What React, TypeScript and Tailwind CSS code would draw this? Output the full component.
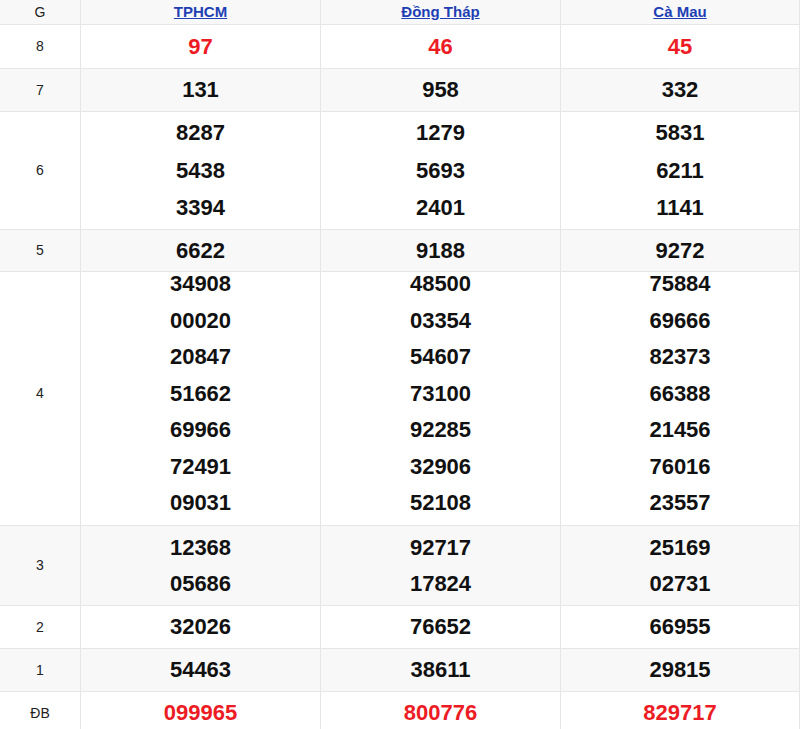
import React from "react";

type Row = {
  g: string;
  vals: string[][];
  h: string;
  bg: string;
  red?: boolean;
  lh: string;
  shift?: boolean;
};

const rows: Row[] = [
  { g: "8", vals: [["97"], ["46"], ["45"]], h: "h-[44px]", bg: "bg-white", red: true, lh: "leading-[36px]" },
  { g: "7", vals: [["131"], ["958"], ["332"]], h: "h-[43px]", bg: "bg-[#f8f8f8]", lh: "leading-[36px]" },
  {
    g: "6",
    vals: [
      ["8287", "5438", "3394"],
      ["1279", "5693", "2401"],
      ["5831", "6211", "1141"],
    ],
    h: "h-[118px]",
    bg: "bg-white",
    lh: "leading-[37.5px]",
  },
  { g: "5", vals: [["6622"], ["9188"], ["9272"]], h: "h-[42px]", bg: "bg-[#f8f8f8]", lh: "leading-[36px]" },
  {
    g: "4",
    vals: [
      ["34908", "00020", "20847", "51662", "69966", "72491", "09031"],
      ["48500", "03354", "54607", "73100", "92285", "32906", "52108"],
      ["75884", "69666", "82373", "66388", "21456", "76016", "23557"],
    ],
    h: "h-[254px]",
    bg: "bg-white",
    lh: "leading-[36.5px]",
    shift: true,
  },
  {
    g: "3",
    vals: [
      ["12368", "05686"],
      ["92717", "17824"],
      ["25169", "02731"],
    ],
    h: "h-[80px]",
    bg: "bg-[#f8f8f8]",
    lh: "leading-[36px]",
  },
  { g: "2", vals: [["32026"], ["76652"], ["66955"]], h: "h-[43px]", bg: "bg-white", lh: "leading-[36px]" },
  { g: "1", vals: [["54463"], ["38611"], ["29815"]], h: "h-[43px]", bg: "bg-[#f8f8f8]", lh: "leading-[36px]" },
  { g: "ĐB", vals: [["099965"], ["800776"], ["829717"]], h: "h-[43px]", bg: "bg-white", red: true, lh: "leading-[36px]" },
];

const cols = "grid grid-cols-[81px_240px_240px_239px]";

export default function App() {
  return (
    <div
      className="w-[800px] bg-white text-[#222]"
      style={{ fontFamily: '"Liberation Sans", Arial, sans-serif' }}
    >
      <div className={`${cols} h-[25px] bg-[#f8f8f8] border-b border-[#e6e6e6]`}>
        <div className="flex items-center justify-center border-r border-[#e6e6e6] text-[14px]">G</div>
        {["TPHCM", "Đồng Tháp", "Cà Mau"].map((n) => (
          <div key={n} className="flex items-center justify-center border-r border-[#e6e6e6]">
            <a href="#" className="text-[15px] font-bold text-[#1e3fb4] underline">
              {n}
            </a>
          </div>
        ))}
      </div>
      {rows.map((r) => (
        <div key={r.g} className={`${cols} ${r.h} ${r.bg} border-b border-[#e6e6e6]`}>
          <div className="flex items-center justify-center border-r border-[#e6e6e6] text-[14px]">
            <span className={r.shift ? "-mt-[10px]" : ""}>{r.g}</span>
          </div>
          {r.vals.map((col, ci) => (
            <div
              key={ci}
              className={`flex flex-col items-center border-r border-[#e6e6e6] ${
                r.shift ? "justify-start" : "justify-center"
              }`}
            >
              <div className={`flex flex-col items-center ${r.shift ? "-mt-[6px]" : ""}`}>
                {col.map((v, vi) => (
                  <div
                    key={vi}
                    className={`${r.lh} text-[22px] font-bold ${r.red ? "text-[#ed1c24]" : "text-[#111]"}`}
                  >
                    {v}
                  </div>
                ))}
              </div>
            </div>
          ))}
        </div>
      ))}
    </div>
  );
}
